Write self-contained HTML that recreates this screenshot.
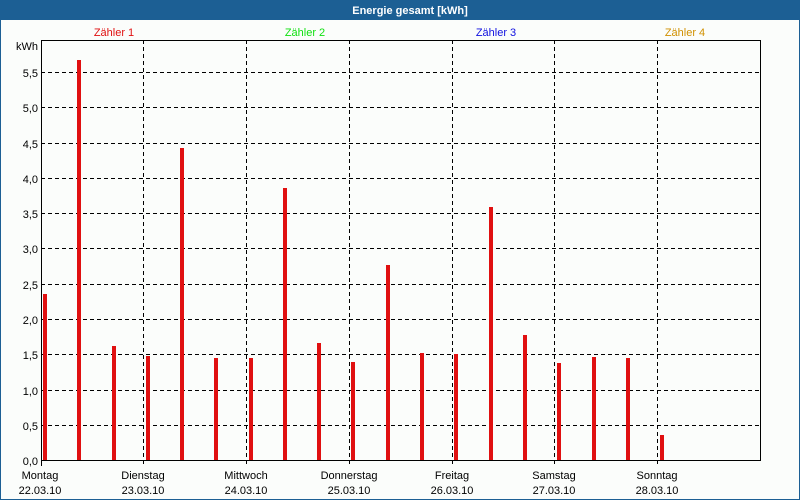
<!DOCTYPE html>
<html><head><meta charset="utf-8"><style>
html,body{margin:0;padding:0;background:#fbfdfb}
svg{display:block}
text{font-family:"Liberation Sans",sans-serif;font-size:11px}
</style></head><body>
<svg width="800" height="500" xmlns="http://www.w3.org/2000/svg">
<rect x="0" y="0" width="800" height="500" fill="#fbfdfb"/>
<rect x="0" y="0" width="800" height="20" fill="#1c5f94"/>
<rect x="0" y="0" width="1" height="500" fill="#1c5f94"/>
<rect x="799" y="0" width="1" height="500" fill="#1c5f94"/>
<rect x="0" y="499" width="800" height="1" fill="#1c5f94"/>
<text x="410" y="14" fill="#fff" font-weight="bold" text-anchor="middle">Energie gesamt [kWh]</text>
<text x="114" y="36" fill="#e01010" text-anchor="middle">Zähler 1</text>
<text x="305" y="36" fill="#10e010" text-anchor="middle">Zähler 2</text>
<text x="496" y="36" fill="#1010e0" text-anchor="middle">Zähler 3</text>
<text x="685" y="36" fill="#d09000" text-anchor="middle">Zähler 4</text>
<g stroke="#000" stroke-width="1" stroke-dasharray="4,3">
<line x1="41" x2="760" y1="425.5" y2="425.5"/>
<line x1="41" x2="760" y1="390.5" y2="390.5"/>
<line x1="41" x2="760" y1="354.5" y2="354.5"/>
<line x1="41" x2="760" y1="319.5" y2="319.5"/>
<line x1="41" x2="760" y1="284.5" y2="284.5"/>
<line x1="41" x2="760" y1="248.5" y2="248.5"/>
<line x1="41" x2="760" y1="213.5" y2="213.5"/>
<line x1="41" x2="760" y1="178.5" y2="178.5"/>
<line x1="41" x2="760" y1="143.5" y2="143.5"/>
<line x1="41" x2="760" y1="107.5" y2="107.5"/>
<line x1="41" x2="760" y1="72.5" y2="72.5"/>
<line y1="40" y2="466" x1="143.5" x2="143.5"/>
<line y1="40" y2="466" x1="246.5" x2="246.5"/>
<line y1="40" y2="466" x1="349.5" x2="349.5"/>
<line y1="40" y2="466" x1="452.5" x2="452.5"/>
<line y1="40" y2="466" x1="554.5" x2="554.5"/>
<line y1="40" y2="466" x1="657.5" x2="657.5"/>
</g>
<g fill="#e01010">
<rect x="43" y="294" width="4" height="166"/>
<rect x="77" y="60" width="4" height="400"/>
<rect x="112" y="346" width="4" height="114"/>
<rect x="146" y="356" width="4" height="104"/>
<rect x="180" y="148" width="4" height="312"/>
<rect x="214" y="358" width="4" height="102"/>
<rect x="249" y="358" width="4" height="102"/>
<rect x="283" y="188" width="4" height="272"/>
<rect x="317" y="343" width="4" height="117"/>
<rect x="351" y="362" width="4" height="98"/>
<rect x="386" y="265" width="4" height="195"/>
<rect x="420" y="353" width="4" height="107"/>
<rect x="454" y="354" width="4" height="106"/>
<rect x="489" y="207" width="4" height="253"/>
<rect x="523" y="335" width="4" height="125"/>
<rect x="557" y="363" width="4" height="97"/>
<rect x="592" y="357" width="4" height="103"/>
<rect x="626" y="358" width="4" height="102"/>
<rect x="660" y="435" width="4" height="25"/>
</g>
<polyline points="41.5,40 41.5,460.5 760.5,460.5 760.5,40.5 41,40.5" fill="none" stroke="#000" stroke-width="1"/>
<line x1="41.5" y1="460" x2="41.5" y2="466" stroke="#000"/>
<g fill="#000" text-anchor="end">
<text x="38" y="50">kWh</text>
<text x="38" y="77">5,5</text>
<text x="38" y="112">5,0</text>
<text x="38" y="148">4,5</text>
<text x="38" y="183">4,0</text>
<text x="38" y="218">3,5</text>
<text x="38" y="253">3,0</text>
<text x="38" y="289">2,5</text>
<text x="38" y="324">2,0</text>
<text x="38" y="359">1,5</text>
<text x="38" y="395">1,0</text>
<text x="38" y="430">0,5</text>
<text x="38" y="465">0,0</text>
</g>
<g fill="#000" text-anchor="middle">
<text x="40" y="479">Montag</text><text x="40" y="494">22.03.10</text>
<text x="143" y="479">Dienstag</text><text x="143" y="494">23.03.10</text>
<text x="246" y="479">Mittwoch</text><text x="246" y="494">24.03.10</text>
<text x="349" y="479">Donnerstag</text><text x="349" y="494">25.03.10</text>
<text x="452" y="479">Freitag</text><text x="452" y="494">26.03.10</text>
<text x="554" y="479">Samstag</text><text x="554" y="494">27.03.10</text>
<text x="657" y="479">Sonntag</text><text x="657" y="494">28.03.10</text>
</g>
</svg>
</body></html>
